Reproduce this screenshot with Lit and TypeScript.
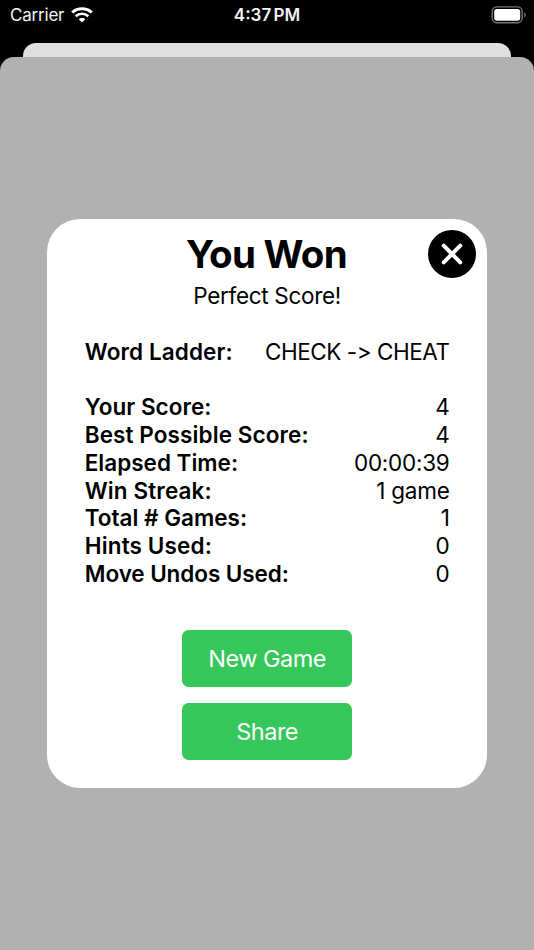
import { LitElement, html, css } from "lit";
import { customElement, state } from "lit/decorators.js";

interface Stat {
  label: string;
  value: string;
  tracking: number;
}

@customElement("status-bar")
class StatusBar extends LitElement {
  static styles = css`
    :host {
      display: grid;
      grid-template-columns: 1fr auto 1fr;
      align-items: center;
      height: 30px;
      padding: 0 8px 0 10px;
      color: #f4f4f4;
      font-size: 17px;
      line-height: 30px;
    }
    .carrier { display: flex; align-items: center; gap: 6.5px; letter-spacing: -0.2px; }
    .time { font-weight: 600; letter-spacing: 0; word-spacing: -2px; margin-left: -2px; }
    .battery { justify-self: end; }
    svg { display: block; }
  `;
  render() {
    return html`
      <div class="carrier">
        <span>Carrier</span>
        <svg width="22" height="16" viewBox="0 0 22 16" fill="none" stroke="#fff">
          <path d="M1.2 5.5C6.6.5 15.4.5 20.8 5.5" stroke-width="3" />
          <path d="M4.7 9.2C8.3 5.9 13.7 5.9 17.3 9.2" stroke-width="2.7" />
          <path d="M11 15.6 7.7 12.2C9.4 10.5 12.6 10.5 14.3 12.2Z" fill="#fff" stroke="none" />
        </svg>
      </div>
      <div class="time">4:37 PM</div>
      <svg class="battery" width="35" height="18" viewBox="0 0 35 18">
        <rect x="1.2" y=".9" width="30" height="15.8" rx="4.6" fill="none" stroke="#777" stroke-width="1.4" />
        <rect x="3.2" y="2.9" width="26" height="11.8" rx="2.7" fill="#fff" />
        <path d="M33.2 6.2C35.2 7 35.2 10.6 33.2 11.4Z" fill="#777" />
      </svg>
    `;
  }
}

@customElement("stat-row")
class StatRow extends LitElement {
  static properties = { label: {}, value: {}, tracking: { type: Number } };
  declare label: string;
  declare value: string;
  declare tracking: number;
  static styles = css`
    :host {
      display: flex;
      justify-content: space-between;
      height: 27.75px;
      line-height: 27.75px;
      font-size: 22.5px;
      white-space: nowrap;
    }
    .label { font-weight: 600; }
    .value { font-weight: 400; letter-spacing: var(--value-tracking, -0.25px); }
  `;
  render() {
    return html`<span class="label" style="letter-spacing:${this.tracking ?? 0}px">${this.label}</span
      ><span class="value">${this.value}</span>`;
  }
}

@customElement("app-root")
class AppRoot extends LitElement {
  static styles = css`
    :host {
      display: flex;
      flex-direction: column;
      height: 950px;
      overflow: hidden;
      background: #000;
      color: #000;
      font-family: Inter, "Liberation Sans", sans-serif;
    }
    .back-sheet {
      flex: none;
      height: 14px;
      margin: 13px 23px 0;
      border-radius: 13px 13px 0 0;
      background: #e0e0e0;
    }
    .sheet {
      flex: 1;
      display: flex;
      flex-direction: column;
      align-items: center;
      border-radius: 14px 14px 0 0;
      background: #b1b1b1;
    }
    .card {
      position: relative;
      box-sizing: border-box;
      display: flex;
      flex-direction: column;
      width: 439.5px;
      height: 569.5px;
      margin-top: 161.5px;
      padding: 11.5px 37.2px 0 37.5px;
      border-radius: 33px;
      background: #fff;
    }
    h1 {
      margin: 0 1.5px 0 0;
      text-align: center;
      font-size: 38.5px;
      font-weight: 700;
      line-height: 48px;
      letter-spacing: -0.75px;
    }
    .subtitle {
      margin: 4.3px 0 27.75px;
      text-align: center;
      font-size: 22.5px;
      font-weight: 400;
      line-height: 27.75px;
      letter-spacing: -0.3px;
    }
    .ladder {
      font-feature-settings: "calt" 0;
      --value-tracking: -0.45px;
    }
    .close {
      position: absolute;
      top: 11px;
      right: 11px;
      width: 48px;
      height: 48px;
      padding: 0;
      border: 0;
      background: none;
    }
    .close svg { display: block; }
    .stats { margin-top: 27.75px; }
    .actions {
      display: flex;
      flex-direction: column;
      align-items: center;
      gap: 15.5px;
      margin-top: 42.7px;
    }
    .action {
      width: 170px;
      height: 57px;
      padding: 0;
      border: 0;
      border-radius: 6.5px;
      background: #35c759;
      color: #fff;
      font: 400 23.5px/57px Inter, "Liberation Sans", sans-serif;
      letter-spacing: -0.5px;
    }
  `;

  @state() private stats: Stat[] = [
    { label: "Your Score:", value: "4", tracking: 0.05 },
    { label: "Best Possible Score:", value: "4", tracking: 0.1 },
    { label: "Elapsed Time:", value: "00:00:39", tracking: 0 },
    { label: "Win Streak:", value: "1 game", tracking: 0.12 },
    { label: "Total # Games:", value: "1", tracking: 0 },
    { label: "Hints Used:", value: "0", tracking: 0.15 },
    { label: "Move Undos Used:", value: "0", tracking: -0.08 },
  ];

  render() {
    return html`
      <status-bar></status-bar>
      <div class="back-sheet"></div>
      <main class="sheet">
        <section class="card">
          <h1>You Won</h1>
          <div class="subtitle">Perfect Score!</div>
          <stat-row class="ladder" label="Word Ladder:" value="CHECK -> CHEAT" tracking="0.1"></stat-row>
          <div class="stats">
            ${this.stats.map(
              (s) => html`<stat-row .label=${s.label} .value=${s.value} .tracking=${s.tracking}></stat-row>`
            )}
          </div>
          <div class="actions">
            <button class="action">New Game</button>
            <button class="action">Share</button>
          </div>
          <button class="close" aria-label="Close">
            <svg width="48" height="48" viewBox="0 0 48 48">
              <circle cx="24" cy="24" r="24" />
              <path d="M15.7 15.7 32.3 32.3M32.3 15.7 15.7 32.3" stroke="#fff" stroke-width="4" stroke-linecap="round" />
            </svg>
          </button>
        </section>
      </main>
    `;
  }
}
